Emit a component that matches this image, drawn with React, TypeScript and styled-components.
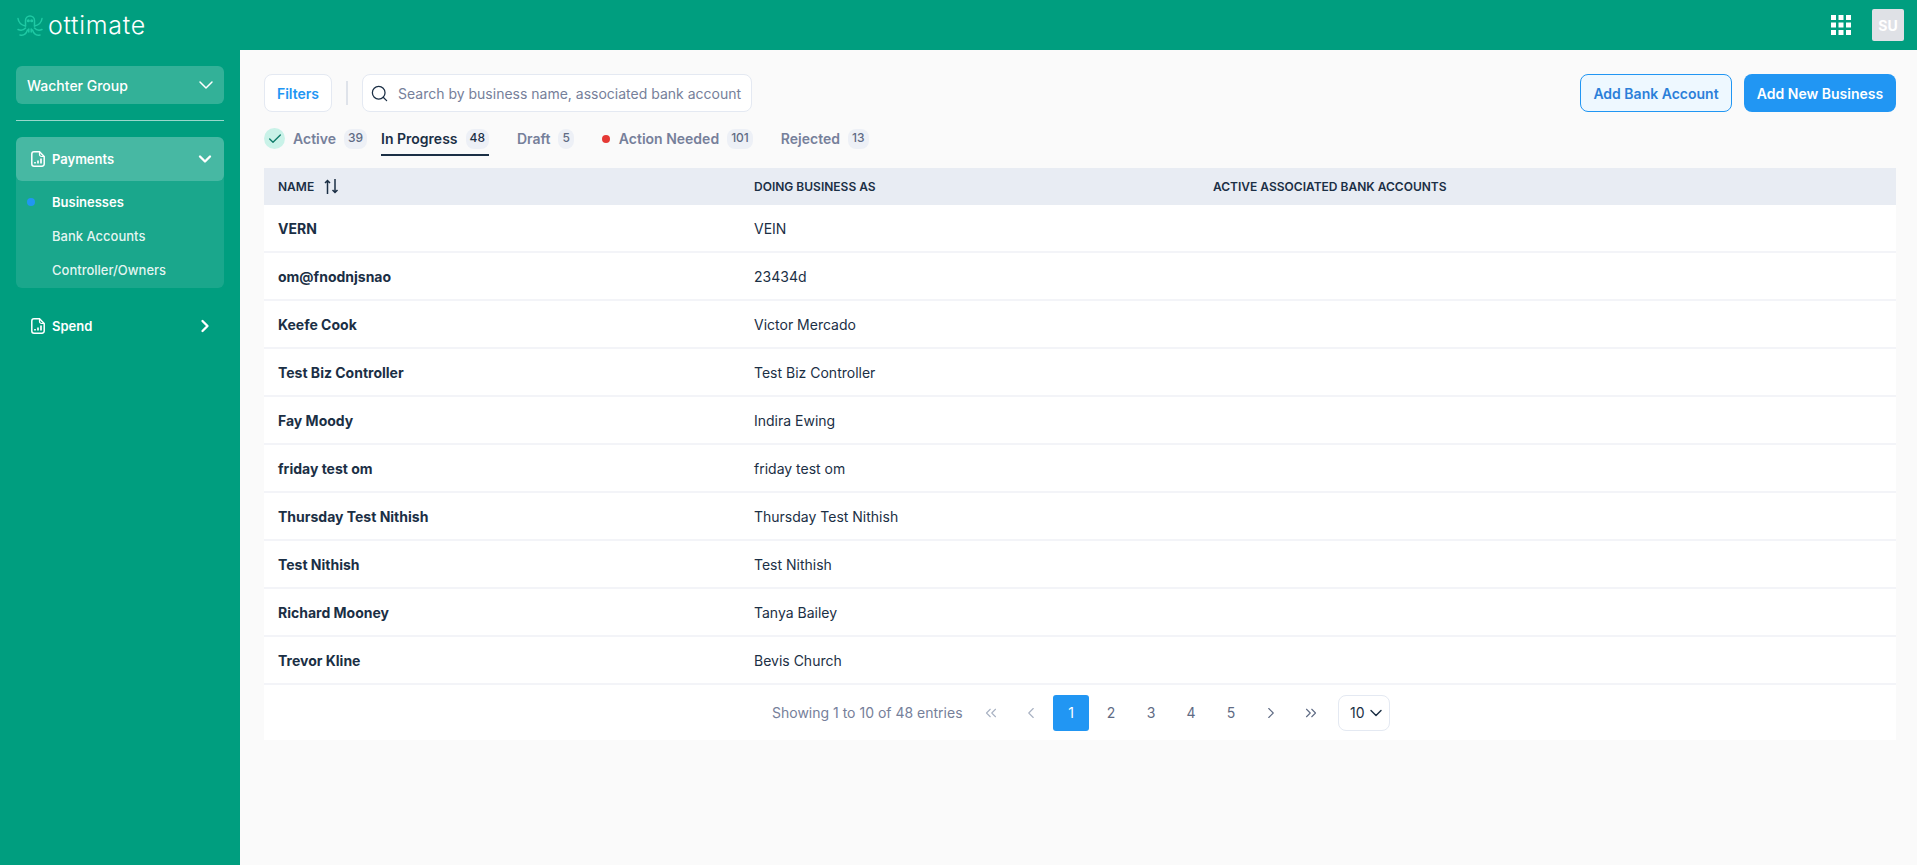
import { ReactNode } from "react";
import styled, { createGlobalStyle } from "styled-components";
import { ChevronDown, ChevronRight, ChevronLeft, ChevronsLeft, ChevronsRight, Search, Check } from "lucide-react";

const rows = [
  ["VERN", "VEIN"],
  ["om@fnodnjsnao", "23434d"],
  ["Keefe Cook", "Victor Mercado"],
  ["Test Biz Controller", "Test Biz Controller"],
  ["Fay Moody", "Indira Ewing"],
  ["friday test om", "friday test om"],
  ["Thursday Test Nithish", "Thursday Test Nithish"],
  ["Test Nithish", "Test Nithish"],
  ["Richard Mooney", "Tanya Bailey"],
  ["Trevor Kline", "Bevis Church"],
];

function ReportIcon() {
  return (
    <svg width="14" height="16" viewBox="0 0 14 16" fill="none" stroke="#fff" strokeWidth="1.500">
      <path d="M3 .8h5.500l4.700 4.700v7.500A2.200 2.200 0 0 1 11 15.200H3A2.200 2.200 0 0 1 .8 13V3A2.200 2.200 0 0 1 3 .8Z" />
      <path d="M8.500 1v2.500a2 2 0 0 0 2 2H13" strokeWidth="1.200" />
      <path d="M4 12.500v-1.500M7 12.500v-3M10 12.500V7.500" strokeWidth="1.700" />
    </svg>
  );
}

function Logo() {
  return (
    <svg width="26" height="23" viewBox="0 0 26 23" fill="none" stroke="#1fc9a4" strokeWidth="1.500" strokeLinecap="round">
      <path d="M8.500 12V6.500a4.500 4.500 0 0 1 9 0V12" />
      <path d="M1 4.500c.5 4 3 6.500 7.500 7.500M25 4.500c-.5 4-3 6.500-7.500 7.500" />
      <path d="M1 15.500c3 1.200 5.500.8 7.500-1.500M25 15.500c-3 1.200-5.500.8-7.500-1.500" />
      <path d="M3 21c3.500 .8 6-.5 7.500-5M23 21c-3.500 .8-6-.5-7.500-5" />
      <path d="M11.800 15v3M14.200 15v3" />
      <circle cx="11.300" cy="6.800" r=".8" fill="#1fc9a4" />
      <circle cx="14.700" cy="6.800" r=".8" fill="#1fc9a4" />
    </svg>
  );
}

function GridIcon() {
  return (
    <svg width="20" height="20" viewBox="0 0 20 20" fill="#fff">
      {[0, 7.500, 15].flatMap((y) =>
        [0, 7.500, 15].map((x) => <rect key={`${x}-${y}`} x={x} y={y} width="5" height="5" />)
      )}
    </svg>
  );
}

function SortIcon() {
  return (
    <svg width="15" height="15" viewBox="0 0 15 15" fill="none" stroke="#1b2f45" strokeWidth="1.500">
      <path d="M3.500 15V1.500M1 4l2.500-2.500L6 4M11 0v13.500M8.500 11l2.500 2.500 2.500-2.500" />
    </svg>
  );
}

type TabProps = {
  label: string;
  count: number;
  active?: boolean;
  tight?: boolean;
  lead?: ReactNode;
};

function Tab({ label, count, active, tight, lead }: TabProps) {
  return (
    <TabItem $active={active} $tight={tight}>
      {lead}
      <span>{label}</span>
      <Count $active={active}>{count}</Count>
    </TabItem>
  );
}

export default function App() {
  return (
    <>
      <GlobalStyle />
      <Shell>
        <Header>
          <Brand>
            <Logo />
            <BrandName>ottimate</BrandName>
          </Brand>
          <HeaderRight>
            <GridIcon />
            <Avatar>SU</Avatar>
          </HeaderRight>
        </Header>
        <Body>
          <Sidebar>
            <OrgSelect>
              Wachter Group
              <ChevronDown size={24} strokeWidth={1.500} />
            </OrgSelect>
            <SideDivider />
            <NavGroup>
              <NavHead $open>
                <ReportIcon />
                <NavLabel>Payments</NavLabel>
                <ChevronDown size={20} strokeWidth={2.800} />
              </NavHead>
              <SubList>
                <SubItem $current>Businesses</SubItem>
                <SubItem>Bank Accounts</SubItem>
                <SubItem>Controller/Owners</SubItem>
              </SubList>
            </NavGroup>
            <NavHead>
              <ReportIcon />
              <NavLabel>Spend</NavLabel>
              <ChevronRight size={20} strokeWidth={2.800} />
            </NavHead>
          </Sidebar>
          <Main>
            <Toolbar>
              <FilterButton>Filters</FilterButton>
              <ToolDivider />
              <SearchBox>
                <Search size={19} color="#1b2f45" strokeWidth={1.600} />
                <SearchInput placeholder="Search by business name, associated bank account" />
              </SearchBox>
              <Actions>
                <OutlineButton>Add Bank Account</OutlineButton>
                <SolidButton>Add New Business</SolidButton>
              </Actions>
            </Toolbar>
            <Tabs>
              <Tab
                label="Active"
                count={39}
                tight
                lead={
                  <CheckBadge>
                    <Check size={16} strokeWidth={2} color="#0d7a68" />
                  </CheckBadge>
                }
              />
              <Tab label="In Progress" count={48} active />
              <Tab label="Draft" count={5} />
              <Tab label="Action Needed" count={101} lead={<RedDot />} />
              <Tab label="Rejected" count={13} />
            </Tabs>
            <TableHead>
              <HeadCell>
                NAME
                <SortIcon />
              </HeadCell>
              <HeadCell>DOING BUSINESS AS</HeadCell>
              <HeadCell>ACTIVE ASSOCIATED BANK ACCOUNTS</HeadCell>
            </TableHead>
            {rows.map(([name, dba]) => (
              <Row key={name}>
                <NameCell>{name}</NameCell>
                <Cell>{dba}</Cell>
                <Cell />
              </Row>
            ))}
            <Pager>
              <PagerInfo>Showing 1 to 10 of 48 entries</PagerInfo>
              <PageButton $muted>
                <ChevronsLeft size={18} strokeWidth={1.500} />
              </PageButton>
              <PageButton $muted>
                <ChevronLeft size={18} strokeWidth={1.500} />
              </PageButton>
              <PageButton $current>1</PageButton>
              <PageButton>2</PageButton>
              <PageButton>3</PageButton>
              <PageButton>4</PageButton>
              <PageButton>5</PageButton>
              <PageButton>
                <ChevronRight size={18} strokeWidth={1.500} />
              </PageButton>
              <PageButton>
                <ChevronsRight size={18} strokeWidth={1.500} />
              </PageButton>
              <SizeSelect>
                10
                <ChevronDown size={20} strokeWidth={1.700} color="#1b2f45" />
              </SizeSelect>
            </Pager>
          </Main>
        </Body>
      </Shell>
    </>
  );
}

const GlobalStyle = createGlobalStyle`
  html, body {
    margin: 0;
    height: 100%;
    background: #fafafa;
    font-family: Inter, "Noto Sans", sans-serif;
    color: #1b2f45;
  }
  #root {
    height: 100%;
  }
  * {
    box-sizing: border-box;
  }
`;

const Shell = styled.div`
  display: flex;
  flex-direction: column;
  height: 100vh;
  overflow: hidden;
`;

const Header = styled.header`
  flex: 0 0 50px;
  display: flex;
  align-items: center;
  justify-content: space-between;
  padding: 0 13px 0 17px;
  background: #009e7f;
`;

const Brand = styled.div`
  display: flex;
  align-items: center;
  gap: 5px;
`;

const BrandName = styled.span`
  font-family: Inter, sans-serif;
  font-weight: 300;
  font-size: 25px;
  line-height: 1;
  color: #fff;
  letter-spacing: 0.7px;
`;

const HeaderRight = styled.div`
  display: flex;
  align-items: center;
  gap: 21px;
`;

const Avatar = styled.div`
  width: 32px;
  height: 32px;
  display: flex;
  align-items: center;
  justify-content: center;
  background: #dfe1e6;
  border-radius: 2px;
  color: #fff;
  font-size: 14px;
  font-weight: 700;
`;

const Body = styled.div`
  flex: 1;
  display: flex;
  min-height: 0;
`;

const Sidebar = styled.aside`
  flex: 0 0 240px;
  padding: 16px;
  background: #009e7f;
  color: #fff;
`;

const OrgSelect = styled.div`
  height: 38px;
  display: flex;
  align-items: center;
  justify-content: space-between;
  padding: 0 6px 0 11px;
  border-radius: 6px;
  background: rgba(255, 255, 255, 0.2);
  font-size: 14px;
  font-weight: 500;
`;

const SideDivider = styled.div`
  height: 1px;
  margin: 16px 0;
  background: rgba(255, 255, 255, 0.6);
`;

const NavGroup = styled.div`
  margin-bottom: 16px;
  border-radius: 6px;
  background: rgba(255, 255, 255, 0.1);
`;

const NavHead = styled.div<{ $open?: boolean }>`
  height: 44px;
  display: flex;
  align-items: center;
  padding: 0 9px 0 15px;
  border-radius: 6px;
  background: ${(props) => (props.$open ? "rgba(255, 255, 255, 0.2)" : "transparent")};
`;

const NavLabel = styled.span`
  flex: 1;
  margin-left: 7px;
  font-size: 13px;
  font-weight: 600;
`;

const SubList = styled.div`
  padding: 4px 0 1px;
`;

const SubItem = styled.div<{ $current?: boolean }>`
  position: relative;
  height: 34px;
  display: flex;
  align-items: center;
  padding-left: 36px;
  font-size: 13px;
  font-weight: ${(props) => (props.$current ? 600 : 500)};
  color: ${(props) => (props.$current ? "#fff" : "rgba(255, 255, 255, 0.9)")};

  &::before {
    content: "";
    display: ${(props) => (props.$current ? "block" : "none")};
    position: absolute;
    left: 11px;
    top: 13px;
    width: 8px;
    height: 8px;
    border-radius: 50%;
    background: #2196f3;
  }
`;

const Main = styled.main`
  flex: 1;
  min-width: 0;
  padding: 24px 21px 24px 24px;
  background: #fafafa;
`;

const Toolbar = styled.div`
  display: flex;
  align-items: center;
`;

const FilterButton = styled.button`
  width: 68px;
  height: 38px;
  border: 1px solid #e4e9f2;
  border-radius: 8px;
  background: #fff;
  color: #2196f3;
  font: 600 14px Inter, sans-serif;
`;

const ToolDivider = styled.div`
  width: 2px;
  height: 24px;
  margin: 0 14px;
  background: #dfe3ea;
`;

const SearchBox = styled.div`
  width: 390px;
  height: 38px;
  display: flex;
  align-items: center;
  gap: 9px;
  padding: 0 7px;
  border: 1px solid #e4e9f2;
  border-radius: 8px;
  background: #fff;
`;

const SearchInput = styled.input`
  flex: 1;
  min-width: 0;
  border: 0;
  padding: 0;
  outline: 0;
  background: transparent;
  font: 400 14px Inter, sans-serif;
  color: #1b2f45;

  &::placeholder {
    color: #76809a;
    opacity: 1;
  }
`;

const Actions = styled.div`
  margin-left: auto;
  display: flex;
  gap: 12px;
`;

const OutlineButton = styled.button`
  width: 152px;
  height: 38px;
  border: 1px solid #2196f3;
  border-radius: 8px;
  background: #eef8ff;
  color: #2b7fd9;
  font: 600 14px Inter, sans-serif;
`;

const SolidButton = styled.button`
  width: 152px;
  height: 38px;
  border: 0;
  border-radius: 8px;
  background: #2196f3;
  color: #fff;
  font: 600 14px Inter, sans-serif;
`;

const Tabs = styled.div`
  display: flex;
  gap: 28px;
  margin: 14px 0 12px;
`;

const TabItem = styled.div<{ $active?: boolean; $tight?: boolean }>`
  height: 30px;
  display: flex;
  align-items: flex-start;
  line-height: 26px;
  gap: 8px;
  margin-right: ${(props) => (props.$tight ? "-14px" : "0")};
  border-bottom: 2px solid ${(props) => (props.$active ? "#1b2f45" : "transparent")};
  font-size: 14px;
  font-weight: 600;
  color: ${(props) => (props.$active ? "#1b2f45" : "#76809a")};
`;

const Count = styled.span<{ $active?: boolean }>`
  min-width: 15px;
  height: 20px;
  margin-top: 3px;
  padding: 0 4px;
  border-radius: 8px;
  background: #edf0f6;
  font-size: 12px;
  font-weight: 500;
  line-height: 17px;
  text-align: center;
  color: ${(props) => (props.$active ? "#1b2f45" : "#5f6b84")};
`;

const CheckBadge = styled.span`
  width: 21px;
  height: 21px;
  margin-top: 2px;
  display: flex;
  align-items: center;
  justify-content: center;
  border-radius: 50%;
  background: #c9f2e8;
`;

const RedDot = styled.span`
  width: 8px;
  height: 8px;
  margin: 9px 1px 0 0;
  border-radius: 50%;
  background: #e53935;
`;

const TableHead = styled.div`
  height: 37px;
  display: grid;
  grid-template-columns: 476px 459px 1fr;
  background: #e8ecf3;
`;

const HeadCell = styled.div`
  display: flex;
  align-items: center;
  gap: 10px;
  padding: 0 14px;
  font-size: 12px;
  font-weight: 600;
`;

const Row = styled.div`
  height: 48px;
  display: grid;
  grid-template-columns: 476px 459px 1fr;
  align-items: center;
  background: #fff;
  border-bottom: 2px solid #f3f4f8;
`;

const Cell = styled.div`
  padding: 0 14px;
  font-size: 14px;
  font-weight: 400;
`;

const NameCell = styled(Cell)`
  font-weight: 700;
`;

const Pager = styled.div`
  height: 55px;
  display: flex;
  align-items: center;
  justify-content: center;
  gap: 4px;
  padding-left: 2px;
  background: #fff;
`;

const PagerInfo = styled.span`
  width: 190px;
  margin-right: 7px;
  font-size: 14px;
  white-space: nowrap;
  color: #76809a;
`;

const PageButton = styled.div<{ $current?: boolean; $muted?: boolean }>`
  width: 36px;
  height: 36px;
  display: flex;
  align-items: center;
  justify-content: center;
  border-radius: 3px;
  font-size: 14px;
  background: ${(props) => (props.$current ? "#2196f3" : "transparent")};
  color: ${(props) => (props.$current ? "#fff" : props.$muted ? "#a9b2c3" : "#5f6b84")};
`;

const SizeSelect = styled.div`
  width: 52px;
  height: 36px;
  margin-left: 5px;
  display: flex;
  align-items: center;
  gap: 1px;
  padding-left: 11px;
  border: 1px solid #e4e9f2;
  border-radius: 8px;
  font-size: 14px;
  flex-shrink: 0;
`;
